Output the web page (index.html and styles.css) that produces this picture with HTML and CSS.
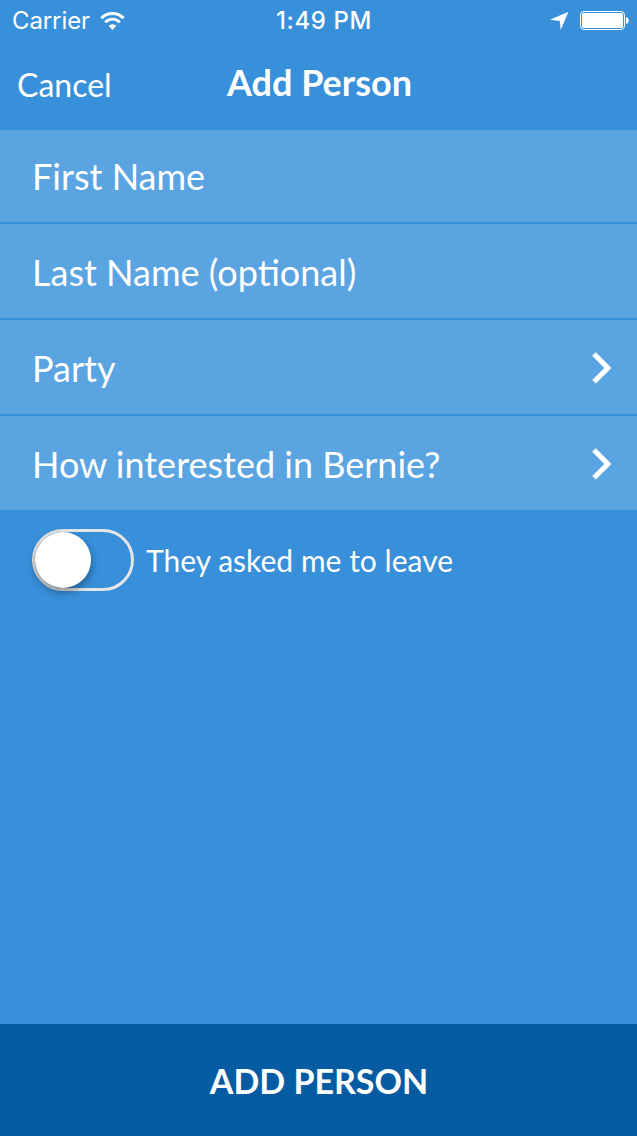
FILE: index.html
```html
<!DOCTYPE html>
<html lang="en">
<head>
<meta charset="utf-8">
<title>Add Person</title>
<link rel="stylesheet" href="styles.css">
</head>
<body>
<div class="screen">
  <div class="status">
    <div class="status-left">
      <span class="carrier">Carrier</span>
      <svg class="wifi" width="25" height="18" viewBox="0 .4 26 18.4" preserveAspectRatio="none" fill="none" stroke="#fff">
        <path d="M1.4 6.8a16.2 16.2 0 0 1 23.2 0" stroke-width="3.1"/>
        <path d="M5.4 10.9a10.6 10.6 0 0 1 15.2 0" stroke-width="2.9"/>
        <path d="M8.9 14.5a5.8 5.8 0 0 1 8.2 0L13 18.7z" fill="#fff" stroke="none"/>
      </svg>
    </div>
    <span class="time">1:49 PM</span>
    <div class="status-right">
      <svg class="location" width="19" height="19" viewBox="0 0 19 19"><path d="M18.5 .8 10.6 19 9.8 10 0 8.7z" fill="#fff"/></svg>
      <svg class="battery" width="49" height="19" viewBox="0 0 49 19">
        <rect x=".5" y=".5" width="44" height="18" rx="3.5" fill="none" stroke="#fff"/>
        <rect x="2" y="2" width="41" height="15" rx="1.8" fill="#fff"/>
        <path d="M46 6c3.7 1 3.7 6 0 7z" fill="#fff"/>
      </svg>
    </div>
  </div>
  <header class="nav">
    <span class="cancel">Cancel</span>
    <h1 class="title">Add Person</h1>
  </header>
  <main class="form">
    <div class="row row-first"><span>First Name</span></div>
    <div class="row"><span>Last Name (optional)</span></div>
    <div class="row"><span>Party</span>
      <svg class="chevron" width="20" height="32" viewBox="0 0 20 32"><path d="M3.8 .2 19.5 15.9 3.8 31.6 .2 28 12.3 15.9 .2 3.8z" fill="#fff"/></svg></div>
    <div class="row row-end"><span>How interested in Bernie?</span>
      <svg class="chevron" width="20" height="32" viewBox="0 0 20 32"><path d="M3.8 .2 19.5 15.9 3.8 31.6 .2 28 12.3 15.9 .2 3.8z" fill="#fff"/></svg></div>
    <div class="toggle-row">
      <div class="toggle"><div class="knob"></div></div>
      <span class="toggle-label">They asked me to leave</span>
    </div>
  </main>
  <footer class="submit"><span>ADD PERSON</span></footer>
</div>
</body>
</html>
```
FILE: styles.css
```css
* { box-sizing: border-box; }
body { margin: 0; }
.screen {
  width: 637px;
  height: 1136px;
  display: flex;
  flex-direction: column;
  overflow: hidden;
  background: #388fda;
  color: #fff;
  font-family: Lato, sans-serif;
  white-space: nowrap;
}
.status {
  height: 40px;
  display: grid;
  grid-template-columns: 1fr auto 1fr;
  align-items: center;
  padding: 1px 8px 0 12px;
  font-family: Inter, sans-serif;
  font-size: 24px;
  line-height: 40px;
}
.status-left, .status-right { display: flex; align-items: center; }
.status-left { gap: 11px; }
.status-right { justify-content: flex-end; gap: 11px; padding-bottom: 1px; }
.wifi { margin-bottom: 1px; }
.carrier { width: 77px; font-weight: 400; letter-spacing: -0.1px; }
.time { padding-left: 7px; font-weight: 500; letter-spacing: 0.6px; }
.nav {
  height: 90px;
  display: grid;
  grid-template-columns: 1fr auto 1fr;
  padding: 0 16px 0 17px;
}
.cancel { font-size: 32px; line-height: 89px; }
.title { margin: 0; padding-left: 1px; font-size: 36px; font-weight: 700; line-height: 85px; }
.form { flex: 1; }
.row {
  height: 96px;
  display: flex;
  justify-content: space-between;
  padding: 0 25px 0 32px;
  background: #5aa4e2;
  border-bottom: 2px solid #388fda;
  font-size: 36px;
  line-height: 96px;
}
.row-first { height: 94px; line-height: 92px; }
.row-end { height: 94px; border-bottom: 0; }
.chevron { margin-top: 32px; }
.toggle-row {
  display: flex;
  align-items: center;
  gap: 12px;
  padding: 19px 32px 0;
  font-size: 30px;
}
.toggle {
  width: 102px;
  height: 62px;
  border: 3px solid #e5e5e5;
  border-radius: 31px;
}
.toggle-label { letter-spacing: 0.02px; }
.knob {
  width: 56px;
  height: 56px;
  border-radius: 50%;
  background: #fff;
  box-shadow: 0 4px 8px rgba(0, 0, 0, 0.4);
}
.submit {
  height: 112px;
  padding-left: 1px;
  background: #055ca3;
  font-size: 34px;
  font-weight: 700;
  line-height: 114px;
  text-align: center;
}
```
